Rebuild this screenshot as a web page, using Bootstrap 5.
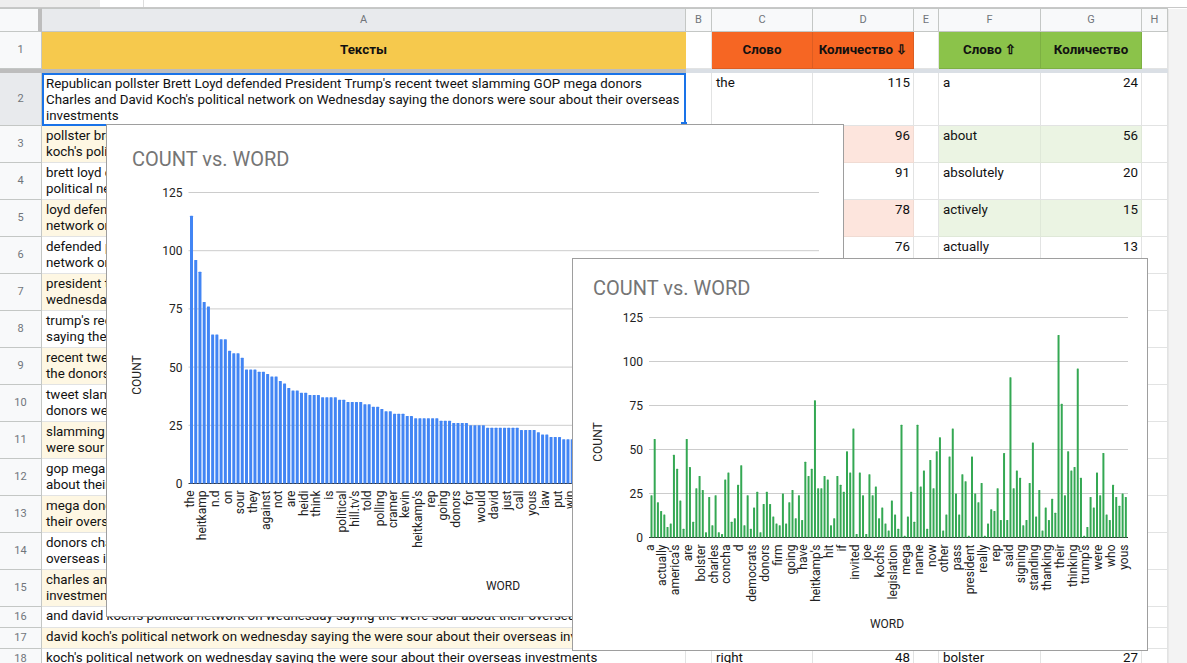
<!DOCTYPE html>
<html lang="ru">
<head>
<meta charset="utf-8">
<title>Слова</title>
<link href="https://cdn.jsdelivr.net/npm/bootstrap@5.3.0/dist/css/bootstrap.min.css" rel="stylesheet">
<style>
html,body{height:663px;overflow:hidden;background:#fff}
body{font-family:Roboto,"Liberation Sans",sans-serif;font-size:13.33px;line-height:16px;color:#111;position:relative}
.strip{height:8px;border-bottom:1px solid #c8c8c8}
.strip-a{width:100px;background:#eee}
.strip-b{width:44px;border-right:1px solid #ddd}
.sheet{table-layout:fixed;border-collapse:separate;border-spacing:0;width:1168px;margin:0}
.sheet td,.sheet th{padding:2px 3px 0 4px;border-right:1px solid #e2e3e3;border-bottom:1px solid #e2e3e3;vertical-align:top;overflow:hidden;font-weight:400;background:#fff;color:#111}
.h-cols{height:24px}.h-title{height:37px}.h-freeze{height:4px}.h-big{height:53px}.h-std{height:37px}.h-low{height:21px}
.sheet .colhd{padding:0;text-align:center;vertical-align:middle;font-size:11px;color:#70757a;background:#f8f9fa;border-color:#c4c7c5;border-top:1px solid #c4c7c5}
.sheet .colhd.sel{background:#e8eaed}
.sheet .corner{padding:0;background:#f8f9fa;border-color:#c4c7c5;border-right:4px solid #bdbdbd;border-top:1px solid #c4c7c5}
.sheet .rownum{padding:0;text-align:center;vertical-align:middle;font-size:11px;color:#70757a;background:#f8f9fa;border-color:#c4c7c5}
.sheet .rownum.sel{background:#e8eaed}
.sheet .ttl{padding:0;text-align:center;vertical-align:middle;font-weight:700;color:#111}
.sheet .yel{background:#f6c94d;border-color:#f6c94d}
.sheet .ora{background:#f66623;border-color:#dc5d22}
.sheet .grn{background:#8bc34a;border-color:#7db043}
.sheet td.freeze{padding:0;background:#dadfe5;border:0;font-size:0;line-height:0}
.sheet td.freeze0{background:#bdbdbd}
.sheet td.active{border:2px solid #1a73e8;padding:1px 2px 0 2px;position:relative;overflow:visible}
.handle{position:absolute;right:-3px;bottom:-3px;width:6px;height:5px;background:#1a73e8}
.sheet .num{text-align:right;padding-right:3px;padding-left:0}
.sheet .sand{background:#fef7e3}
.sheet .pink{background:#fde5dd;border-color:#f0dbd3}
.sheet .mint{background:#ebf4e3;border-color:#dfe8d8}
.sheet .h-low td{padding-top:1px;white-space:nowrap}
.sheet .h-low .rownum{padding:0}
.sidebar{position:absolute;left:1168px;top:9px;bottom:0;right:0;background:#f3f3f3;border-left:1px solid #e8e8e8}
.chartwin{position:absolute;background:#fff;border:1px solid #9e9e9e}
.chart-one{left:106px;top:124px;width:738px;height:493px}
.chart-two{left:572px;top:258px;width:576px;height:393px}
.chartwin svg{display:block}
.chartwin text{font-family:Roboto,"Liberation Sans",sans-serif;font-size:12px;fill:#222}
.chartwin .cttl{font-size:20px;fill:#757575}
</style>
</head>
<body>
<div class="strip d-flex"><div class="strip-a"></div><div class="strip-b"></div></div>
<table class="sheet">
<colgroup><col style="width:42px"><col style="width:644px"><col style="width:26px"><col style="width:101px"><col style="width:101px"><col style="width:25px"><col style="width:102px"><col style="width:101px"><col style="width:26px"></colgroup>
<tbody id="sheetbody">
<tr class="h-cols"><th class="corner"></th><th class="colhd sel">A</th><th class="colhd">B</th><th class="colhd">C</th><th class="colhd">D</th><th class="colhd">E</th><th class="colhd">F</th><th class="colhd">G</th><th class="colhd">H</th></tr>
<tr class="h-title"><td class="rownum">1</td><td class="ttl yel">Тексты</td><td></td><td class="ttl ora">Слово</td><td class="ttl ora">Количество ⇩</td><td></td><td class="ttl grn">Слово ⇧</td><td class="ttl grn">Количество</td><td></td></tr>
<tr class="h-freeze"><td class="freeze freeze0"></td><td class="freeze freeze0"></td><td class="freeze" colspan="7"></td></tr>
</tbody>
</table>
<div class="sidebar"></div>
<div class="chartwin chart-one"><svg id="chartA" width="736" height="491"></svg></div>
<div class="chartwin chart-two"><svg id="chartB" width="574" height="391"></svg></div>
<script>
var W="republican pollster brett loyd defended president trump's recent tweet slamming gop mega donors charles and david koch's political network on wednesday saying the donors were sour about their overseas investments".split(" ");
var right={2:["the",115,"a",24],3:["to",96,"about",56],4:["said",91,"absolutely",20],5:["heitkamp",78,"actively",15],6:["they",76,"actually",13],18:["right",48,"bolster",27]};
var body=document.getElementById("sheetbody"),h="";
for(var r=2;r<=18;r++){
  var odd=r%2==1;
  var txt=r==2?"Republican pollster Brett Loyd defended President Trump's recent tweet slamming GOP mega donors Charles and David Koch's political network on Wednesday saying the donors were sour about their overseas investments":W.map(function(w,i){return {w:w,i:i}}).filter(function(o){return o.i>=r-2&&!(r>=16&&o.i==23)}).map(function(o){return o.w}).join(" ");
  var d=right[r]||["","","",""];
  h+='<tr class="'+(r==2?"h-big":r<16?"h-std":"h-low")+'"><td class="rownum'+(r==2?" sel":"")+'">'+r+'</td>'+
  '<td class="'+(r==2?"active":odd?"sand":"")+'">'+txt+(r==2?'<span class="handle"></span>':'')+'</td><td></td>'+
  '<td class="'+(odd&&r<18?"pink":"")+'">'+d[0]+'</td><td class="num '+(odd&&r<18?"pink":"")+'">'+d[1]+'</td><td></td>'+
  '<td class="'+(odd&&r<18?"mint":"")+'">'+d[2]+'</td><td class="num '+(odd&&r<18?"mint":"")+'">'+d[3]+'</td><td></td></tr>';
}
body.insertAdjacentHTML("beforeend",h);

var blue=[115,96,91,78,76,64,64,62,62,57,56,56,54,49,49,49,48,48,47,46,46,44,43,41,40,40,39,39,38,38,38,37,37,37,37,36,36,35,35,35,35,34,34,33,33,32,31,31,30,30,30,29,29,28,28,28,28,28,28,27,27,27,26,26,26,26,25,25,25,25,24,24,24,24,24,24,24,24,23,23,23,23,22,21,21,20,20,20,19,19,19,18,18,18,17,17,17,16,16,16,15,15,15,14,14,14,13,13,13,12,12,12,11,11,11,10,10,10,9,9,9,8,8,8,7,7,7,6,6,6,5,5,5,4,4,4,3,3,3,2,2,2,2,2,1,1,1,1,1];
var green=[24,56,20,15,13,6,8,47,39,21,5,56,40,9,28,35,27,3,23,7,24,3,2,33,37,9,11,30,41,7,24,5,17,26,3,19,26,19,12,8,7,25,8,20,27,11,24,10,43,35,39,78,28,28,35,33,7,11,35,30,26,49,37,62,2,37,24,2,36,24,29,11,17,8,4,21,13,5,64,1,12,26,9,64,29,38,5,44,28,49,57,4,13,46,62,25,13,36,32,1,46,25,20,31,1,8,16,15,28,10,48,10,91,28,38,34,7,10,31,54,12,27,4,17,10,22,14,115,76,24,49,38,40,96,34,1,6,23,17,37,24,48,13,10,30,23,18,25,23];
var lblA=["the","heitkamp","n.d","on","sour","they","against","not","are","heidi","think","is","political","hill.tv's","told","polling","cramer","kevin","heitkamp's","rep","going","donors","for","would","david","just","call","yous","law","put","win"];
var lblB=["a","actually","america's","are","bolster","charles","concha","d","democrats","donors","firm","going","have","heitkamp's","hit","if","invited","joe","koch's","legislation","mega","name","now","other","pass","president","really","rep","said","signing","standing","thanking","their","thinking","trump's","were","who","yous"];

function chart(id,c){
  var s="",i;
  s+='<text class="cttl" x="'+c.tx+'" y="'+c.ty+'">COUNT vs. WORD</text>';
  for(i=0;i<=5;i++){
    var y=c.y0-i*c.step;
    s+='<line x1="'+c.x0+'" x2="'+c.x1+'" y1="'+y+'" y2="'+y+'" stroke="'+(i?"#cccccc":"#333333")+'" stroke-width="1"/>';
    s+='<text x="'+(c.x0-6)+'" y="'+(y+4.5)+'" text-anchor="end">'+(i*25)+'</text>';
  }
  c.data.forEach(function(v,k){
    var hh=v*c.step/25;
    s+='<rect x="'+(c.bx+k*c.pitch).toFixed(2)+'" y="'+(c.y0-hh).toFixed(2)+'" width="'+c.bw+'" height="'+hh.toFixed(2)+'" rx="0.5" fill="'+c.fill+'"/>';
  });
  c.lbl.forEach(function(t,k){
    var x=c.bx+k*c.every*c.pitch+c.bw/2+2,y=c.y0+7;
    s+='<text transform="rotate(-90 '+x.toFixed(1)+' '+y+')" x="'+x.toFixed(1)+'" y="'+y+'" text-anchor="end">'+t+'</text>';
  });
  s+='<text transform="rotate(-90 '+c.cx+' '+c.cy+')" x="'+c.cx+'" y="'+c.cy+'" text-anchor="middle">COUNT</text>';
  s+='<text x="'+c.wx+'" y="'+c.wy+'" text-anchor="middle">WORD</text>';
  document.getElementById(id).innerHTML=s;
}
chart("chartA",{x0:81.5,x1:712,y0:358.5,step:58.2,bx:83,pitch:4.23,bw:3,fill:"#4285f4",data:blue,every:3,lbl:lblA,tx:25,ty:41,cx:34,cy:250,wx:396,wy:465});
chart("chartB",{x0:76,x1:555,y0:278.5,step:44,bx:77.5,pitch:3.205,bw:2,fill:"#34a853",data:green,every:4,lbl:lblB,tx:20,ty:36,cx:29,cy:183,wx:314,wy:369});
</script>
<script src="https://cdn.jsdelivr.net/npm/bootstrap@5.3.0/dist/js/bootstrap.bundle.min.js"></script>
</body>
</html>
